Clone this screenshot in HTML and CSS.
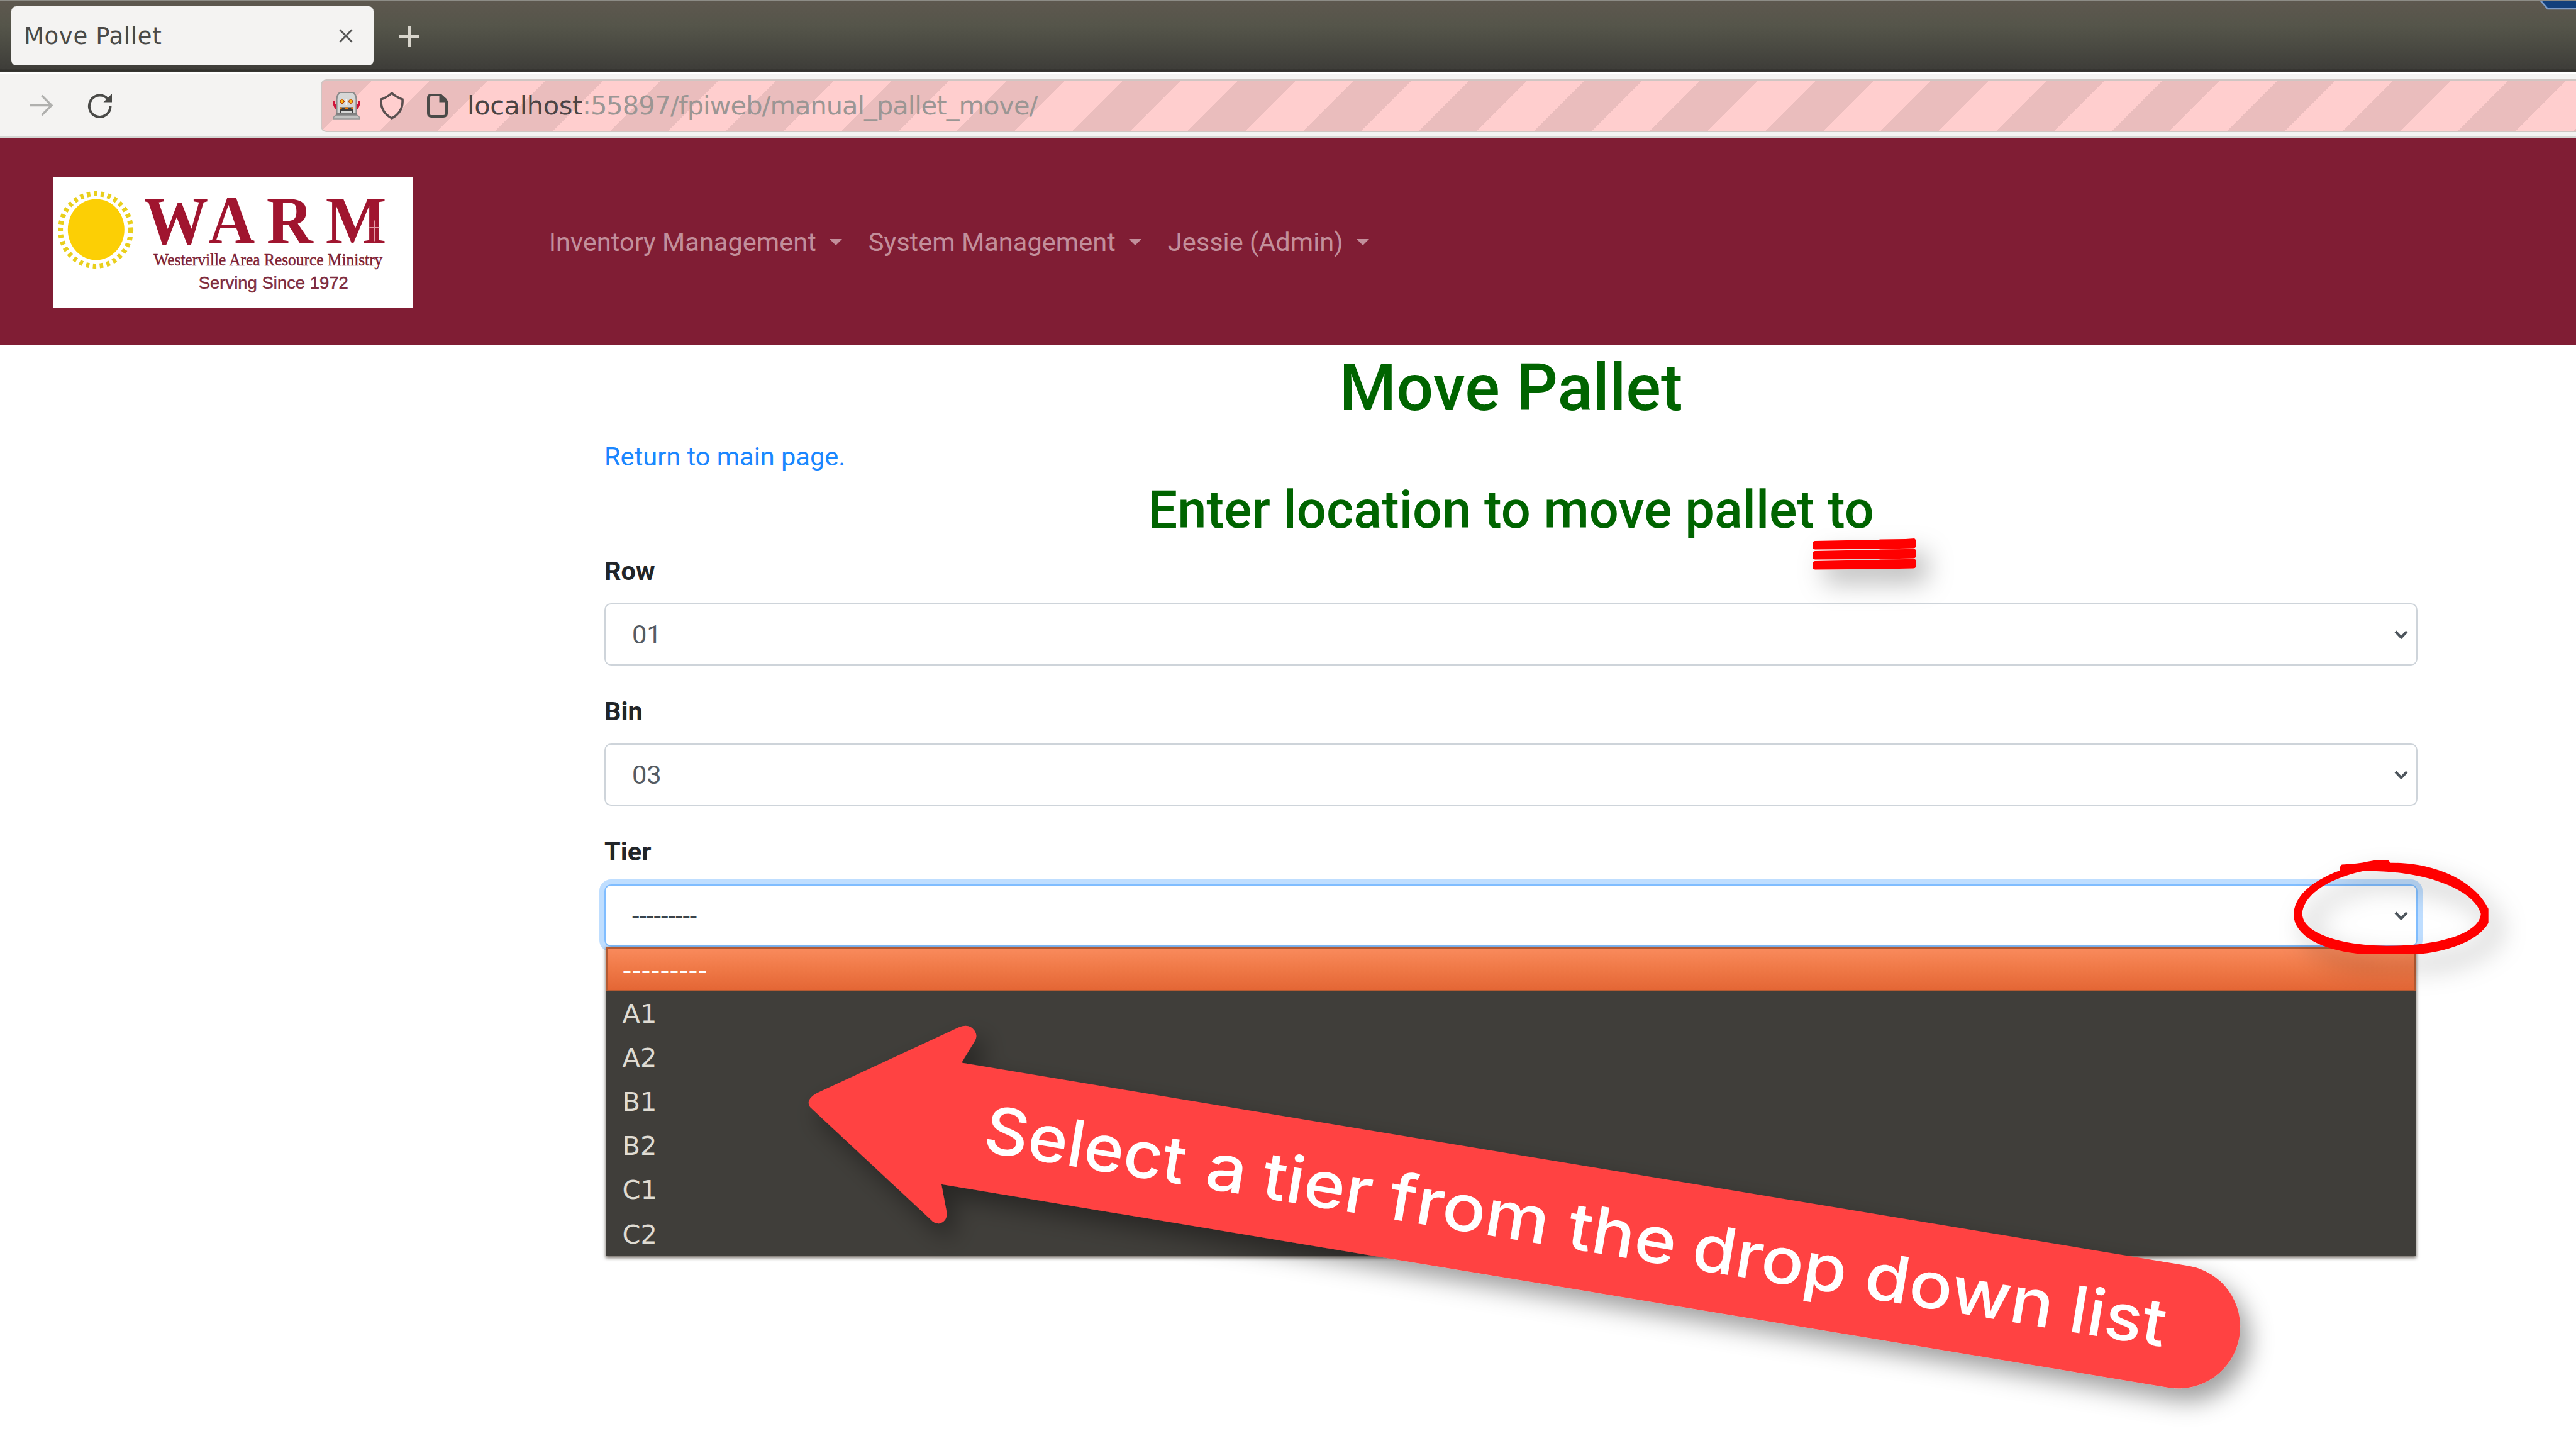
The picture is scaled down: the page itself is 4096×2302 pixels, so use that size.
FILE: index.html
```html
<!DOCTYPE html>
<html lang="en">
<head>
<meta charset="utf-8">
<title>Move Pallet</title>
<link rel="stylesheet" href="styles.css">
</head>
<body>
<div class="tabbar">
  <div class="tab">
    <span>Move Pallet</span>
    <svg class="tab-close" viewBox="0 0 22 22"><path d="M1.5 1.5L20.5 20.5M20.5 1.5L1.5 20.5"/></svg>
  </div>
  <svg class="tab-new" viewBox="0 0 32 34"><path d="M16 0V34M0 17H32"/></svg>
  <svg class="corner" viewBox="0 0 60 16"><path d="M2 -2L15 13H64V-2Z"/></svg>
</div>

<div class="toolbar">
  <svg class="icon-forward" viewBox="0 0 40 36"><path d="M1 18H37M21 2L37 18L21 34"/></svg>
  <svg class="icon-reload" viewBox="0 0 40 40"><path class="line" d="M36.500 21A16.800 17.300 0 1 1 32.500 9.500"/><path class="solid" d="M39 1V14.500H25.500Z"/></svg>
  <div class="urlbar">
    <svg class="icon-robot" viewBox="0 0 44 44">
      <path d="M0 14H3.500V19H7V27H4Q0 22 0 14ZM44 14H40.500V19H37V27H40Q44 22 44 14Z" fill="#d0133a"/>
      <path d="M11.500 1H32.500Q37 4 37.500 12V35H6.500V12Q7 4 11.500 1Z" fill="#d6d7d6" stroke="#8b8b8b" stroke-width="2.200"/>
      <path d="M15 11L19 15L15 19L11 15ZM28.700 11L32.700 15L28.700 19L24.700 15Z" fill="#b8480c" stroke="#b8480c"/>
      <circle cx="15" cy="15" r="2.400" fill="#fcb81b"/><circle cx="28.700" cy="15" r="2.400" fill="#fcb81b"/>
      <path d="M20.500 12H23V21H20.500Z" fill="#f4f4f4"/>
      <path d="M11 24.500H33V33H11Z" fill="#3f3f3f"/>
      <path d="M11 24.500H14.500V27.500H11ZM19 24.500H25V27.500H19ZM29.500 24.500H33V27.500H29.500Z" fill="#f57900"/>
      <path d="M14 30H30V34H14Z" fill="#d6d7d6"/>
      <path d="M6 34H38V38H6Z" fill="#7d7d7d"/>
      <path d="M4 37.500H40L43 41V43H1V41Z" fill="#c3c3c2" stroke="#969696" stroke-width="1.500"/>
    </svg>
    <svg class="icon-shield" viewBox="0 0 38 44"><path d="M19 2Q26 8.500 36 12Q37.500 32 19 42Q.5 32 2 12Q12 8.500 19 2Z"/></svg>
    <svg class="icon-page" viewBox="0 0 33 38"><path class="line" d="M7 2H21L31 12V31Q31 36 26 36H7Q2 36 2 31V7Q2 2 7 2Z"/><path class="solid" d="M19.500 1H23L32 9V13.500H19.500Z"/></svg>
    <span class="url"><b>localhost</b>:55897/fpiweb/manual_pallet_move/</span>
  </div>
</div>

<nav class="navbar">
  <svg class="logo" viewBox="83.700 280.500 572 208.500">
    <rect x="83.700" y="280.500" width="572" height="208.500" fill="#fff"/>
    <ellipse cx="152.500" cy="364.400" rx="45" ry="48.500" fill="#fccf05"/>
    <ellipse cx="151.800" cy="365" rx="56" ry="57.500" fill="none" stroke="#e9cf1c" stroke-width="8" stroke-dasharray="5.500 5.500"/>
    <text class="logo-name" transform="translate(228.500 386.400) scale(.94 1)" x="0 109 207.500 307.500" y="0">WARM</text>
    <path d="M594.700 350V383M587 361.500H603" stroke="#e39aa5" stroke-width="2" fill="none"/>
    <text class="logo-sub" x="244" y="421" textLength="364" lengthAdjust="spacingAndGlyphs">Westerville Area Resource Ministry</text>
    <text class="logo-since" x="315.500" y="458.300" textLength="238" lengthAdjust="spacingAndGlyphs">Serving Since 1972</text>
  </svg>
  <div class="menu">
    <a class="menu-item">Inventory Management<i class="caret"></i></a>
    <a class="menu-item">System Management<i class="caret"></i></a>
    <a class="menu-item">Jessie (Admin)<i class="caret"></i></a>
  </div>
</nav>

<main class="container">
  <h1>Move Pallet</h1>
  <a class="return">Return to main page.</a>
  <h2>Enter location to move pallet to</h2>

  <div class="group">
    <label>Row</label>
    <div class="select"><span>01</span><svg class="chevron" viewBox="0 0 22 14"><path d="M2 2L11 11.500L20 2"/></svg></div>
  </div>
  <div class="group">
    <label>Bin</label>
    <div class="select"><span>03</span><svg class="chevron" viewBox="0 0 22 14"><path d="M2 2L11 11.500L20 2"/></svg></div>
  </div>
  <div class="group">
    <label>Tier</label>
    <div class="select focused"><span>---------</span><svg class="chevron" viewBox="0 0 22 14"><path d="M2 2L11 11.500L20 2"/></svg></div>
    <div class="options">
      <div class="option selected">---------</div>
      <div class="option">A1</div>
      <div class="option">A2</div>
      <div class="option">B1</div>
      <div class="option">B2</div>
      <div class="option">C1</div>
      <div class="option">C2</div>
    </div>
  </div>
</main>

<svg class="annotations" viewBox="0 0 4096 2302">
  <defs>
    <filter id="soft" filterUnits="userSpaceOnUse" x="2700" y="750" width="1396" height="900">
      <feDropShadow dx="18" dy="22" stdDeviation="20" flood-color="#000" flood-opacity=".28"/>
    </filter>
    <filter id="deep" filterUnits="userSpaceOnUse" x="1150" y="1500" width="2600" height="802">
      <feDropShadow dx="14" dy="20" stdDeviation="19" flood-color="#000" flood-opacity=".38"/>
    </filter>
  </defs>
  <!-- triple underline below "to" -->
  <g fill="#f00" filter="url(#soft)">
    <path id="bar" d="M2882 868V864Q2883 860 2886 860L2936 859L2984 858.500L2990 857.500L3030 857L3044 856Q3047 858 3046.500 862V868Q3046 871.500 3042 871.500L2996 872.500L2886 873.500Q2882 873 2882 868Z"/>
    <use href="#bar" y="16"/>
    <use href="#bar" y="32"/>
  </g>
  <!-- ring round the dropdown chevron -->
  <g filter="url(#soft)">
    <path transform="matrix(.27386 0 0 .17892 3596.3 1341.9)" fill="#f00" fill-rule="evenodd" d="M185 630C187 480 270 340 452 235Q452 195 465 182Q560 175 615 155Q680 135 735 145L748 167C1010 162 1240 330 1316 575V700C1260 850 1110 940 930 975H560C350 940 190 820 185 630ZM235 620C240 480 350 320 590 240C970 230 1240 420 1272 620C1265 790 1040 905 725 905C450 900 240 790 235 620Z"/>
  </g>
  <!-- callout arrow -->
  <path filter="url(#deep)" fill="#ff4343" d="M1298.900 1737.700L1526 1632.500Q1542 1627 1550 1639Q1555 1647 1550 1655L1528.900 1689.600L3480 2012.400A97.900 97.900 0 0 1 3448 2205.900L1496.900 1882.700L1505.500 1928Q1506 1942 1494 1945Q1486 1946 1480 1939L1288 1760Q1280 1748 1298.900 1737.700Z"/>
  <g class="callout" transform="translate(1566 1831) rotate(9.410)">
    <text x="-5" y="0" textLength="323" lengthAdjust="spacingAndGlyphs">Select</text>
    <text x="352" y="0" textLength="65" lengthAdjust="spacingAndGlyphs">a</text>
    <text x="443" y="0" textLength="176" lengthAdjust="spacingAndGlyphs">tier</text>
    <text x="647" y="0" textLength="257" lengthAdjust="spacingAndGlyphs">from</text>
    <text x="935" y="0" textLength="174" lengthAdjust="spacingAndGlyphs">the</text>
    <text x="1136" y="0" textLength="248" lengthAdjust="spacingAndGlyphs">drop</text>
    <text x="1414" y="0" textLength="303" lengthAdjust="spacingAndGlyphs">down</text>
    <text x="1744" y="0" textLength="154" lengthAdjust="spacingAndGlyphs">list</text>
  </g>
</svg>
</body>
</html>
```

FILE: styles.css
```css
* { box-sizing: border-box; }
html { font-size: 41.55px; }
body {
  margin: 0;
  width: 4096px;
  height: 2302px;
  overflow: hidden;
  position: relative;
  display: flex;
  flex-direction: column;
  background: #fff;
  color: #212529;
  font: 400 1rem/1.5 Roboto, sans-serif;
}
svg { display: block; flex: none; fill: none; }

/* browser chrome */
.tabbar {
  position: relative;
  height: 114px;
  flex: none;
  display: flex;
  align-items: flex-start;
  padding: 9px 18px 0;
  background: linear-gradient(#5e584f, #55554a 35%, #4a4a42 65%, #3e3d39 96%, #2e2d29 98%, #3a3935);
  border-top: 1px solid #8d8c86;
}
.tab {
  width: 576px;
  height: 94px;
  display: flex;
  align-items: center;
  justify-content: space-between;
  padding: 0 33px 0 20px;
  border-radius: 8px;
  background: #f4f3f2;
  color: #4a4a48;
  font: 37px/1 "DejaVu Sans", sans-serif;
  letter-spacing: .65px;
}
.tab-close { width: 22px; height: 22px; stroke: #555; stroke-width: 2.8; }
.tab-new { width: 32px; height: 34px; margin: 31px 0 0 41px; stroke: #d8d5cc; stroke-width: 4; }
.corner { position: absolute; right: 0; top: 0; width: 60px; height: 16px; fill: #12407c; stroke: #7d9cc8; stroke-width: 2.5; }
.toolbar {
  height: 106px;
  flex: none;
  display: flex;
  align-items: center;
  padding-left: 46px;
  background: #f4f3f2;
  border-top: 4px solid #fff;
  border-bottom: 3px solid #d5d5d3;
}
.icon-forward { width: 39px; height: 35px; stroke: #b0b0ae; stroke-width: 3.5; }
.icon-reload { width: 40px; height: 40px; margin-left: 54px; }
.line { stroke: #4a4a48; stroke-width: 4; }
.solid { fill: #4a4a48; }
.urlbar {
  height: 84px;
  flex: 1;
  display: flex;
  align-items: center;
  margin-left: 331px;
  padding-left: 17px;
  border: 2px solid #cfc6c3;
  border-right: 0;
  border-radius: 9px 0 0 9px;
  background: repeating-linear-gradient(135deg, #eabdbd 0 56.4px, #ffcece 56.4px 121.3px, #eabdbd 121.3px 129.85px);
}
.icon-robot { width: 44px; height: 44px; }
.icon-shield { width: 38px; height: 44px; margin-left: 31px; stroke: #5a5050; stroke-width: 3.6; }
.icon-page { width: 33px; height: 38px; margin-left: 37px; }
.url { margin-left: 31px; color: #9b9694; font: 41.55px/1 "DejaVu Sans", sans-serif; letter-spacing: -1px; white-space: nowrap; }
.url b { font-weight: 400; letter-spacing: -.4px; color: #4a4445; }

/* site navigation */
.navbar {
  height: 327.5px;
  flex: none;
  display: flex;
  align-items: flex-start;
  padding: 60.5px 0 0 83.7px;
  background: #801d34;
}
.logo { width: 572px; height: 208.5px; }
.logo-name { font: 700 109px "Liberation Serif", serif; fill: #a0152f; }
.logo-sub { font: 400 28px "Liberation Serif", serif; fill: #7f1f35; stroke: #7f1f35; stroke-width: .5; }
.logo-since { font: 400 28px "Liberation Sans", sans-serif; fill: #7f2c3e; stroke: #7f2c3e; stroke-width: .5; }
.menu { display: flex; gap: 41.5px; margin: 73.5px 0 0 217px; color: #c28f9b; }
.menu-item { display: flex; align-items: center; white-space: nowrap; }
.caret { margin: 0 0 0 21.5px; border: 10.4px solid transparent; border-top-color: currentColor; border-bottom: 0; }

/* page */
.container { width: 2883px; margin: 7.6px 0 0 961px; display: flex; flex-direction: column; }
h1, h2 { margin: 0; font-weight: 500; line-height: 1.2; text-align: center; color: #006400; }
h1 { font-size: 2.5rem; }
h2 { font-size: 2rem; margin: 3.5px 0 16.5px; }
.return { margin-top: 15px; color: #1a87ff; }
.group { position: relative; margin-bottom: 1rem; }
label { display: block; margin-bottom: 20px; font-weight: 700; }
.select {
  height: 99px;
  display: flex;
  align-items: center;
  justify-content: space-between;
  padding: 1px 13px 0 42px;
  border: 2.6px solid #ced4da;
  border-radius: 10.4px;
  background: #fff;
  color: #565c63;
}
.group + .group { margin-top: .5px; }
.focused { border-color: #80bdff; box-shadow: 0 0 0 8px #bfdeff; color: #3a434b; }
.chevron { width: 22px; height: 14px; stroke: #4d555c; stroke-width: 4; }
.options {
  position: absolute;
  left: 2.5px;
  top: 182.5px;
  width: 2877px;
  background: #403e3a;
  box-shadow: 0 2px 5px 1px rgba(60, 50, 40, .7);
  color: #dfdbd2;
  font: 1rem/72px "DejaVu Sans", sans-serif;
}
.option { height: 70.1px; padding-left: 26px; }
.selected { background: linear-gradient(#f98a5c, #f07a48 45%, #e46635); color: #fff; border: 2px solid #b45a32; line-height: 69px; padding-left: 24px; }

/* tutorial marks drawn over the page */
.annotations { position: absolute; left: 0; top: 0; width: 4096px; height: 2302px; }
.callout { font: 500 103px Inter, sans-serif; fill: #fff; }
```
